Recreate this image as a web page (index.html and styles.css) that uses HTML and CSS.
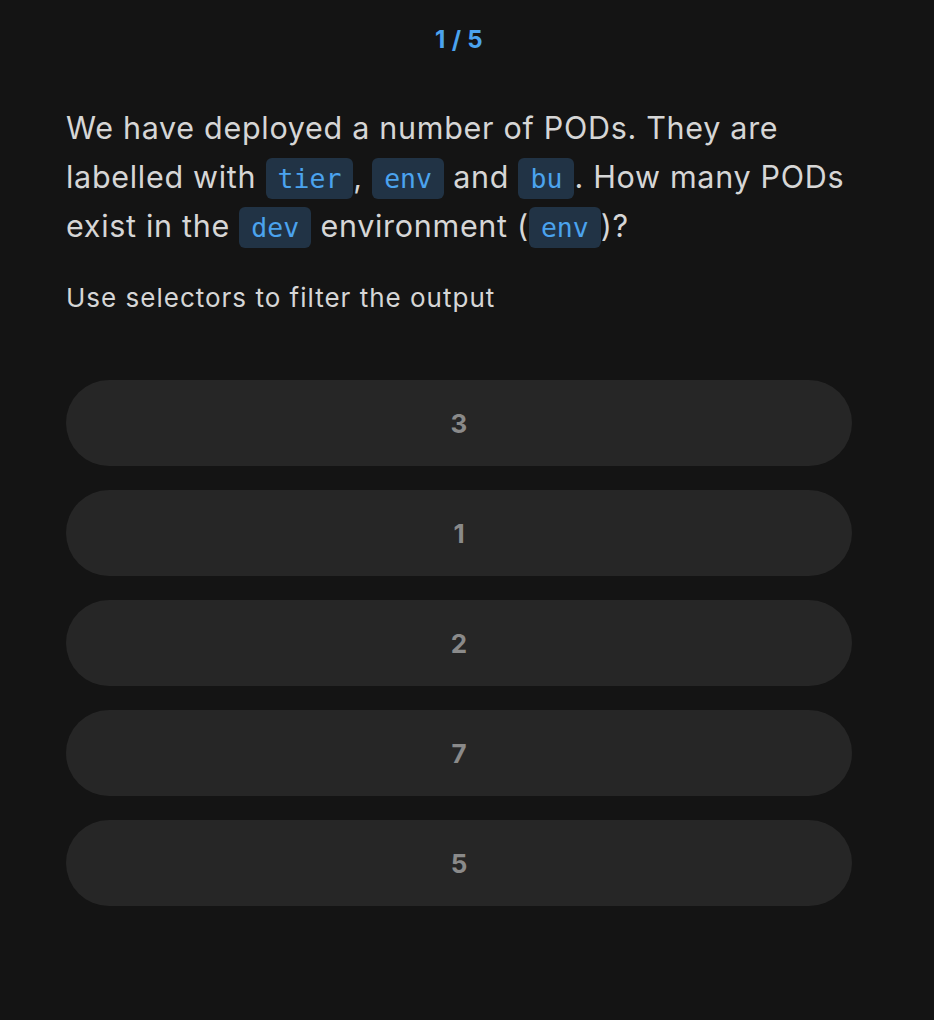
FILE: index.html
```html
<!DOCTYPE html>
<html lang="en">
<head>
<meta charset="utf-8">
<title>Quiz</title>
<link rel="stylesheet" href="styles.css">
</head>
<body>
<main class="quiz">
  <div class="counter">1 / 5</div>
  <p class="question">We have deployed a number of PODs. They are labelled with <code>tier</code>, <code>env</code> and <code>bu</code>. How many PODs exist in the <code>dev</code> environment (<code>env</code>)?</p>
  <p class="hint">Use selectors to filter the output</p>
  <div class="options">
    <button class="option">3</button>
    <button class="option">1</button>
    <button class="option">2</button>
    <button class="option">7</button>
    <button class="option">5</button>
  </div>
</main>
</body>
</html>
```
FILE: styles.css
```css
html, body {
  margin: 0;
  padding: 0;
  background: #141414;
}
body {
  font-family: Inter, "Noto Sans", sans-serif;
  color: #d6d6d6;
}
.quiz {
  padding: 26px 82px 0 66px;
  display: flex;
  flex-direction: column;
}
.counter {
  text-align: center;
  color: #4ba3ee;
  font-weight: 700;
  font-size: 24px;
  line-height: 28px;
  letter-spacing: 0.3px;
}
.question {
  margin: 49px 0 0;
  font-size: 30.5px;
  line-height: 49px;
  letter-spacing: 0.7px;
}
.question code {
  display: inline-block;
  font-family: "DejaVu Sans Mono", monospace;
  font-size: 26.5px;
  line-height: 41px;
  letter-spacing: 0;
  color: #4ba3ee;
  background: #213345;
  border-radius: 6px;
  padding: 0 12px;
}
.hint {
  margin: 32px 0 0;
  font-size: 26px;
  line-height: 32px;
  letter-spacing: 1px;
}
.options {
  margin-top: 66px;
  display: flex;
  flex-direction: column;
  gap: 24px;
}
.option {
  height: 86px;
  border: none;
  border-radius: 43px;
  background: #262626;
  color: #8a8a8a;
  font-family: Inter, sans-serif;
  font-weight: 700;
  font-size: 26px;
  cursor: pointer;
}
```
